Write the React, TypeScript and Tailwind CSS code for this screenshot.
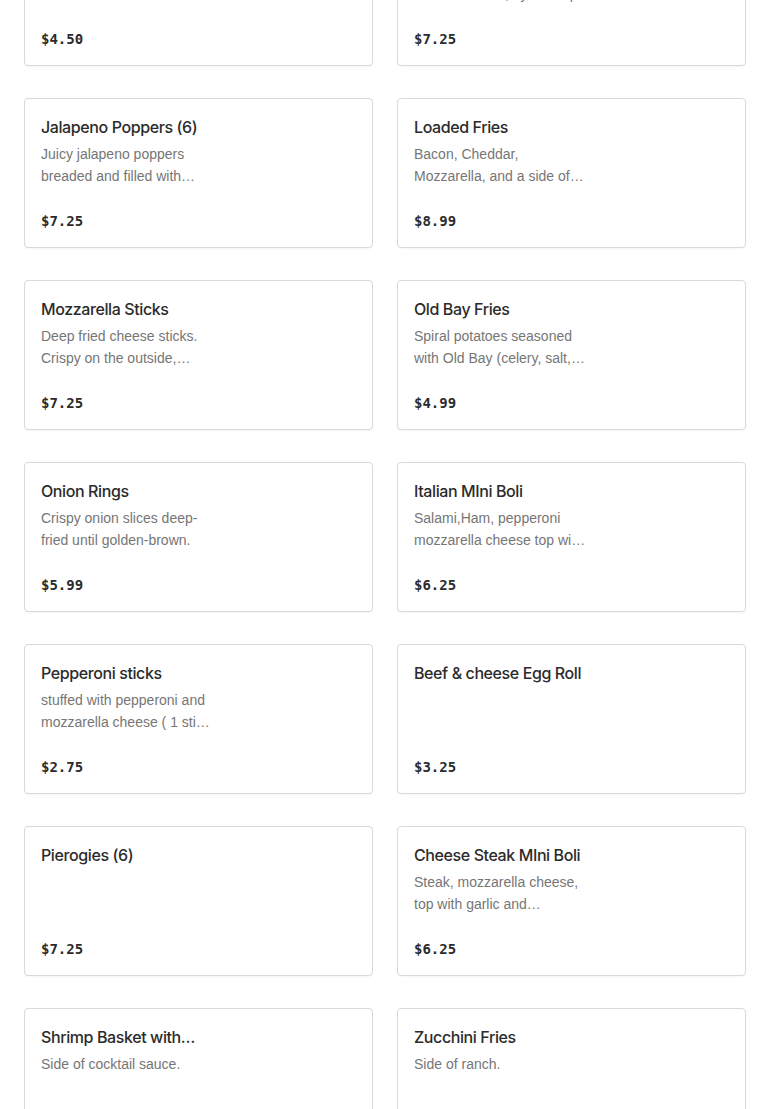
import React from 'react';

type Item = { name: string; desc?: string; price: string };

const ITEMS: Item[] = [
  { name: 'French Fries', desc: 'Crispy golden fries.', price: '$4.50' },
  { name: 'Cheese Fries', desc: 'Crinkle cut fries topped with melted cheese, by the cup.', price: '$7.25' },
  { name: 'Jalapeno Poppers (6)', desc: 'Juicy jalapeno poppers breaded and filled with cream cheese.', price: '$7.25' },
  { name: 'Loaded Fries', desc: 'Bacon, Cheddar, Mozzarella, and a side of ranch dressing.', price: '$8.99' },
  { name: 'Mozzarella Sticks', desc: 'Deep fried cheese sticks. Crispy on the outside, melty inside.', price: '$7.25' },
  { name: 'Old Bay Fries', desc: 'Spiral potatoes seasoned with Old Bay (celery, salt, paprika).', price: '$4.99' },
  { name: 'Onion Rings', desc: 'Crispy onion slices deep-fried until golden-brown.', price: '$5.99' },
  { name: 'Italian MIni Boli', desc: 'Salami,Ham, pepperoni mozzarella cheese top with garlic.', price: '$6.25' },
  { name: 'Pepperoni sticks', desc: 'stuffed with pepperoni and mozzarella cheese ( 1 stick ).', price: '$2.75' },
  { name: 'Beef & cheese Egg Roll', price: '$3.25' },
  { name: 'Pierogies (6)', price: '$7.25' },
  { name: 'Cheese Steak MIni Boli', desc: 'Steak, mozzarella cheese, top with garlic and parmesan seasoning.', price: '$6.25' },
  { name: 'Shrimp Basket with Fries', desc: 'Side of cocktail sauce.', price: '$9.99' },
  { name: 'Zucchini Fries', desc: 'Side of ranch.', price: '$6.99' },
];

const MenuCard = ({ item }: { item: Item }) => (
  <div className="h-[150px] rounded-[4px] border border-[#d9d9d9] bg-white p-4 flex flex-col justify-between shadow-[0_1px_2px_rgba(0,0,0,0.04)]">
    <div>
      <h3 className="text-[16px] leading-[24px] font-medium tracking-[-0.4px] text-[#2b2b2b] line-clamp-1 max-w-[174px] font-['Inter',sans-serif]">
        {item.name}
      </h3>
      {item.desc && (
        <p className="mt-1 text-[14px] leading-[22px] text-[#767676] max-w-[172px] line-clamp-2">{item.desc}</p>
      )}
    </div>
    <span className="text-[14px] leading-[20px] font-bold text-[#2b2b2b] font-['DejaVu_Sans_Mono',monospace]">{item.price}</span>
  </div>
);

export default function App() {
  return (
    <div className="h-[1109px] overflow-hidden bg-white font-['Liberation_Sans',Arial,sans-serif]">
      <div className="-mt-[84px] px-6 grid grid-cols-2 gap-x-6 gap-y-8">
        {ITEMS.map((item, i) => (
          <MenuCard key={i} item={item} />
        ))}
      </div>
    </div>
  );
}
